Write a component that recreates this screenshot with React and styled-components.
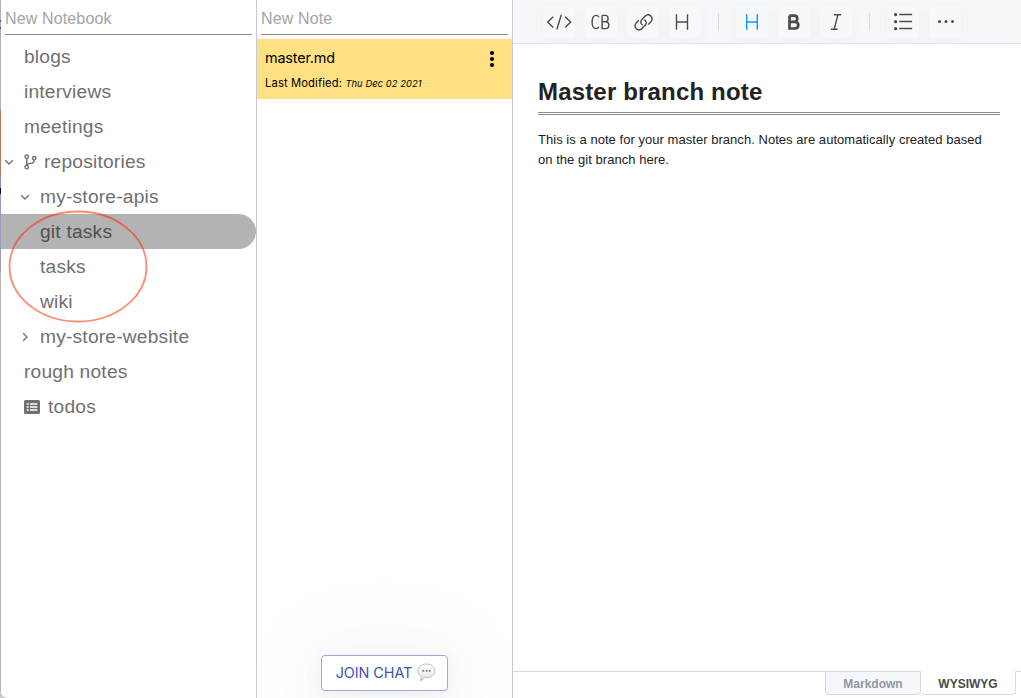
import React from "react";
import styled, { createGlobalStyle } from "styled-components";

const Global = createGlobalStyle`
  * { box-sizing: border-box; }
  body { margin: 0; background: #fff; overflow: hidden; }
`;

const helvetica = `"Liberation Sans", Arial, sans-serif`;

const Window = styled.div`
  display: flex;
  height: 698px;
  background: #fff;
  position: relative;
  overflow: hidden;
  font-family: ${helvetica};
`;

const DesktopEdge = styled.div`
  flex: none;
  width: 1px;
  background: linear-gradient(
    #b0b2b8 0 20px, #4a4c55 20px 22px, #a5a8b2 22px 27px, #4a4c55 27px 29px,
    #aeb0b6 29px 110px, #b97860 110px 175px, #8d88b8 175px 188px,
    #101018 188px 194px, #9c98c4 194px 271px, #b4b4b4 271px
  );
`;

const Corner = styled.div`
  position: absolute;
  left: 0;
  bottom: 0;
  width: 7px;
  height: 9px;
  background: radial-gradient(ellipse 7px 9px at 100% 0, transparent 92%, #cbcbcb 100%);
`;

const Column = styled.section`
  flex: none;
  display: flex;
  flex-direction: column;
  width: 256px;
  border-right: 1px solid #c6cad8;
  position: relative;
`;

const Field = styled.input`
  display: block;
  width: 247px;
  height: 35px;
  margin: 0 4px 4px;
  padding: 4px 0 0;
  border: 0;
  border-bottom: 1px solid #8c8c8c;
  outline: 0;
  background: transparent;
  font: 16px ${helvetica};
  letter-spacing: 0.14px;
  &::placeholder { color: #a3a3a3; opacity: 1; }
`;

const Row = styled.div`
  display: flex;
  align-items: center;
  width: 255px;
  height: 35px;
  padding-left: ${(p) => p.$indent}px;
  border-radius: 0 17.5px 17.5px 0;
  background: ${(p) => (p.$selected ? "#b3b3b3" : "transparent")};
  color: ${(p) => (p.$selected ? "#505050" : "#707070")};
  font-size: 19.2px;
  letter-spacing: 0.2px;
  white-space: nowrap;
  svg { flex: none; }
`;

const Ellipse = styled.svg`
  position: absolute;
  left: 7px;
  top: 209px;
  pointer-events: none;
`;

const Note = styled.article`
  display: flex;
  justify-content: space-between;
  width: 255px;
  height: 60px;
  padding: 10px 13px 0 8px;
  background: #ffe082;
  color: #000;
  font-family: Inter, sans-serif;
`;

const NoteName = styled.div`
  font-size: 14.4px;
  line-height: 18px;
  letter-spacing: -0.16px;
`;

const Modified = styled.div`
  margin-top: 9px;
  font-size: 11.2px;
  line-height: 14px;
  letter-spacing: 0.14px;
  white-space: nowrap;
  em { font-size: 9.3px; letter-spacing: 0.1px; }
`;

const ChatButton = styled.button`
  display: flex;
  align-items: center;
  justify-content: center;
  gap: 5px;
  width: 127px;
  height: 36px;
  margin: auto auto 7px;
  padding: 0 0 2px 3px;
  border: 1px solid #9fa8da;
  border-radius: 4px;
  background: #fff;
  color: #3f51b5;
  font: 14.4px Inter, sans-serif;
  letter-spacing: -0.05px;
  white-space: nowrap;
  box-shadow: 0 3px 12px rgba(30, 50, 60, 0.035), 0 6px 50px rgba(30, 50, 60, 0.05),
    0 8px 100px 20px rgba(30, 50, 60, 0.04);
`;

const NotesColumn = styled(Column)`
  overflow: hidden;
`;

const Editor = styled.main`
  display: flex;
  flex-direction: column;
  flex: 1;
  min-width: 0;
`;

const Toolbar = styled.div`
  display: flex;
  align-items: center;
  gap: 10px;
  flex: none;
  height: 44px;
  padding: 0 0 0 30px;
  border-bottom: 1px solid #e0e3eb;
  background: #f6f7fb;
  overflow: hidden;
`;

const Tool = styled.button`
  display: block;
  width: 32px;
  height: 32px;
  padding: 0;
  border: 0;
  border-radius: 4px;
  background: #f7f8fb;
  color: ${(p) => (p.$active ? "#0a9bf5" : "#4b4b4b")};
  box-shadow: 0 3px 14px rgba(30, 45, 70, 0.035);
  position: relative;
  svg { display: block; }
`;

const Divider = styled.i`
  width: 1px;
  height: 18px;
  margin: 0 7px;
  background: #d8dae2;
`;

const Content = styled.div`
  flex: 1;
  padding: 32px 21px 0 25px;
  color: #222;
`;

const Title = styled.h1`
  margin: 0 0 15px;
  height: 39px;
  border-bottom: 3px double #8f8f8f;
  font-size: 24px;
  line-height: 32px;
  font-weight: 700;
  letter-spacing: 0.17px;
  white-space: nowrap;
`;

const Paragraph = styled.p`
  margin: 0;
  max-width: 456px;
  font-size: 13px;
  line-height: 20px;
  letter-spacing: 0.04px;
`;

const ModeBar = styled.div`
  display: flex;
  flex: none;
  height: 27px;
  &::before { content: ""; flex: 1; border-top: 1px solid #d5d8e6; }
  &::after { content: ""; width: 5px; border-top: 1px solid #d5d8e6; }
`;

const Mode = styled.button`
  width: ${(p) => p.$width}px;
  height: 24px;
  padding: 1px 0 0;
  border: 1px solid #d5d8e6;
  border-top-color: ${(p) => (p.$active ? "transparent" : "#d5d8e6")};
  border-left-width: ${(p) => (p.$active ? 0 : 1)}px;
  border-radius: 0 0 4px 4px;
  background: ${(p) => (p.$active ? "#fff" : "#f6f7fb")};
  color: ${(p) => (p.$active ? "#4b4b4b" : "#9396a5")};
  font: bold 12px ${helvetica};
`;

const Chevron = ({ open, gap }) => (
  <svg width={10} height="10" viewBox="0 0 10 10" fill="none" stroke="currentColor" strokeWidth="1.35" style={{ marginRight: gap }}>
    <path d={open ? "M1.2 3.2L5 7l3.8-3.8" : "M3.2 1.2L7 5 3.2 8.8"} />
  </svg>
);

const Branch = () => (
  <svg width="14" height="18" viewBox="0 0 14 18" fill="none" stroke="currentColor" strokeWidth="1.4" style={{ marginRight: 7 }}>
    <circle cx="3.7" cy="3.7" r="1.7" />
    <circle cx="3.7" cy="14.2" r="1.7" />
    <circle cx="11.2" cy="5.2" r="1.7" />
    <path d="M3.7 5.5v6.9M11.2 7c0 3.2-1.8 3.2-3.7 3.4-2.2.2-3.8.7-3.8 2" />
  </svg>
);

const TodoIcon = () => (
  <svg width="16" height="14" viewBox="0 0 16 14" style={{ marginRight: 8 }}>
    <rect width="16" height="14" rx="1.5" fill="currentColor" />
    <path d="M2.7 4h2M2.7 7h2M2.7 10h2M6 4h7.3M6 7h7.3M6 10h7.3" stroke="#fff" strokeWidth="1.5" />
  </svg>
);

const Bubble = () => (
  <svg width="19" height="19" viewBox="0 0 19 19">
    <defs>
      <linearGradient id="bubble" x1="0" y1="0" x2="0" y2="1">
        <stop offset="0" stopColor="#fdfdfd" />
        <stop offset=".6" stopColor="#f2f2f2" />
        <stop offset="1" stopColor="#cfcfcf" />
      </linearGradient>
    </defs>
    <path d="M9.5 1C4.7 1 1 3.9 1 7.8c0 2.6 1.3 4.6 3.2 5.8.1 1.9-.5 3-1.3 3.9 2.1-.1 3.6-1.2 4.7-2.9 5.9.6 10.4-2.3 10.4-6.8C18 3.9 14.3 1 9.5 1z" fill="url(#bubble)" stroke="#b9b9b9" strokeWidth=".9" />
    <g fill="#858585"><circle cx="6.3" cy="7.9" r="1.05" /><circle cx="9.5" cy="7.9" r="1.05" /><circle cx="12.7" cy="7.9" r="1.05" /></g>
  </svg>
);

const shapes = {
  code: <path d="M10.2 10.7L4.7 16l5.5 5.5M22.2 10.7l5.5 5.3-5.5 5.5M18.3 8.7l-4.5 14.8" />,
  block: (
    <path d="M13.9 11.3C13.3 10 12.5 9.4 11.2 9.4c-2.8 0-4.1 2.6-4.1 6.6s1.3 6.6 4.1 6.6c1.3 0 2.1-.6 2.7-1.9M17.1 9.4v13.2h3.4c2.2 0 3.3-1.5 3.3-3.6 0-2-1.3-3.3-3.3-3.3h-3.4M17.1 9.4h3.1c1.9 0 2.9 1.2 2.9 3.1s-1.1 3.2-2.9 3.2" />
  ),
  link: (
    <path d="M15.7 19.2c-2.3-1.3-2.5-3.9-.8-5.7l2.9-3c1.8-1.8 4.3-2 6-.4 1.8 1.7 1.7 4.2-.1 6l-2.4 2.4M17.3 13.6c2.3 1.4 2.6 4 .9 5.7l-2.9 3c-1.8 1.8-4.3 2-6 .4-1.8-1.7-1.7-4.2.1-6l2.5-2.4" />
  ),
  heading: <path d="M7.5 8.2v15.6M18.5 8.2v15.6M7.5 16h11" />,
  activeHeading: <path d="M10.7 8.2v15.6M21.3 8.2v15.6M10.7 16h10.6" />,
  bold: <path d="M11.5 9.6v12.9h5.2c2.3 0 3.6-1.4 3.6-3.5s-1.3-3.2-3.6-3.2h-5.2M11.5 9.6h4.7c2 0 3.1 1 3.1 3s-1.1 3.2-3.1 3.2" strokeWidth="2.7" />,
  italic: <path d="M14 8.7h7.2M17.9 8.7L14.2 23.3M10.9 23.3h6.7" />,
  list: (
    <>
      <path d="M12.2 8.5h12.9M12.2 15.5h12.9M12.2 22.5h12.9" />
      <g fill="currentColor" stroke="none"><circle cx="8.6" cy="8.7" r="1.6" /><circle cx="8.6" cy="15.7" r="1.6" /><circle cx="8.6" cy="22.7" r="1.6" /></g>
    </>
  ),
  more: <g fill="currentColor" stroke="none"><circle cx="10.5" cy="15.5" r="1.5" /><circle cx="17" cy="15.5" r="1.5" /><circle cx="23.5" cy="15.5" r="1.5" /></g>,
};

const ToolButton = ({ name, active }) => (
  <Tool $active={active} aria-label={name}>
    <svg width="32" height="32" viewBox="0 0 32 32" fill="none" stroke="currentColor" strokeWidth="1.4">{shapes[name]}</svg>
  </Tool>
);

export default function App() {
  return (
    <Window>
      <Global />
      <DesktopEdge />
      <Column>
        <Field placeholder="New Notebook" />
        <Row $indent={23}>blogs</Row>
        <Row $indent={23}>interviews</Row>
        <Row $indent={23}>meetings</Row>
        <Row $indent={3}><Chevron open gap={9} /><Branch />repositories</Row>
        <Row $indent={19}><Chevron open gap={10} />my-store-apis</Row>
        <Row $indent={39} $selected>git tasks</Row>
        <Row $indent={39}>tasks</Row>
        <Row $indent={39}>wiki</Row>
        <Row $indent={19}><Chevron gap={10} />my-store-website</Row>
        <Row $indent={23}>rough notes</Row>
        <Row $indent={23}><TodoIcon />todos</Row>
        <Ellipse width="142" height="116" viewBox="0 0 142 116">
          <ellipse cx="70" cy="57.5" rx="68.5" ry="55" fill="none" stroke="#ff2600" strokeOpacity=".55" strokeWidth="1.8" />
        </Ellipse>
      </Column>
      <NotesColumn>
        <Field placeholder="New Note" />
        <Note>
          <div>
            <NoteName>master.md</NoteName>
            <Modified>Last Modified: <em>Thu Dec 02 2021</em></Modified>
          </div>
          <svg width="15" height="20" viewBox="0 0 15 20">
            <circle cx="8" cy="4" r="2.1" /><circle cx="8" cy="10" r="2.1" /><circle cx="8" cy="16" r="2.1" />
          </svg>
        </Note>
        <ChatButton>JOIN CHAT <Bubble /></ChatButton>
      </NotesColumn>
      <Editor>
        <Toolbar>
          <ToolButton name="code" />
          <ToolButton name="block" />
          <ToolButton name="link" />
          <ToolButton name="heading" />
          <Divider />
          <ToolButton name="activeHeading" active />
          <ToolButton name="bold" />
          <ToolButton name="italic" />
          <Divider />
          <ToolButton name="list" />
          <ToolButton name="more" />
        </Toolbar>
        <Content>
          <Title>Master branch note</Title>
          <Paragraph>This is a note for your master branch. Notes are automatically created based on the git branch here.</Paragraph>
        </Content>
        <ModeBar>
          <Mode $width={96}>Markdown</Mode>
          <Mode $width={95} $active>WYSIWYG</Mode>
        </ModeBar>
      </Editor>
      <Corner />
    </Window>
  );
}
